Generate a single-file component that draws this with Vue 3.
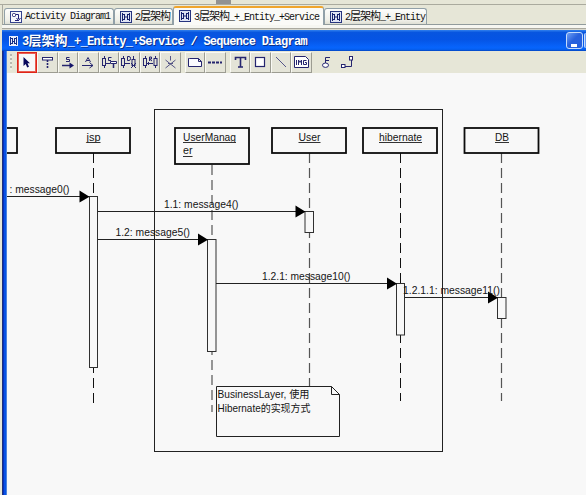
<script setup>
const tabs = [
  { kind: 'activity', width: 110, parts: [{ t: 'Activity Diagram1' }] },
  { kind: 'sequence', width: 59, parts: [{ t: '2' }, { t: '层架构', cjk: true }] },
  { kind: 'sequence', width: 151, active: true, parts: [{ t: '3' }, { t: '层架构', cjk: true }, { t: '_+_Entity_+Service' }] },
  { kind: 'sequence', width: 103, parts: [{ t: '2' }, { t: '层架构', cjk: true }, { t: '_+_Entity' }] },
]

const groups = [
  ['select', 'lifeline', 'sync', 'async', 'create', 'destroy', 'return', 'stop'],
  ['note', 'anchor'],
  ['text', 'rect', 'line', 'image'],
  ['lock', 'connector'],
]

const lifelines = [
  { x: 93.5, from: 153, to: 403 },
  { x: 212, from: 165, to: 412, soft: true },
  { x: 309.5, from: 153, to: 386, soft: true },
  { x: 400.5, from: 153, to: 401 },
  { x: 501.5, from: 153, to: 401, soft: true },
]

const heads = [
  { x: -58, w: 75, h: 25, lines: [] },
  { x: 56, w: 74, h: 25, lines: [{ t: 'jsp', x: 86.5, w: 14 }] },
  { x: 175, w: 74, h: 36, lines: [{ t: 'UserManag', x: 183, w: 53 }, { t: 'er', x: 183, w: 9.5 }] },
  { x: 272, w: 74, h: 25, lines: [{ t: 'User', x: 298.5, w: 22 }] },
  { x: 363, w: 74, h: 25, lines: [{ t: 'hibernate', x: 379, w: 43 }] },
  { x: 464.5, w: 74, h: 25, lines: [{ t: 'DB', x: 495, w: 14 }] },
]

const bars = [
  { x: 89.5, y: 196.5, w: 8, h: 171 },
  { x: 207.5, y: 239.5, w: 8.5, h: 112 },
  { x: 305, y: 211.5, w: 8.5, h: 21 },
  { x: 396.5, y: 283.5, w: 8, h: 51.5 },
  { x: 497.5, y: 297.5, w: 8.5, h: 21 },
]

const messages = [
  { x1: 0, x2: 89, y: 196.5, t: ': message0()', tx: 9.5, w: 60 },
  { x1: 98, x2: 305, y: 211.5, t: '1.1: message4()', tx: 164, w: 74.5 },
  { x1: 98, x2: 207.5, y: 239.5, t: '1.2: message5()', tx: 115.5, w: 74.5 },
  { x1: 216, x2: 396.5, y: 283.5, t: '1.2.1: message10()', tx: 262, w: 88.5 },
  { x1: 405, x2: 497.5, y: 297.5, t: '1.2.1.1: message11()', tx: 403, w: 97 },
]
</script>

<template>
  <div class="app">
    <div class="topstrip"><i class="mark"></i></div>
    <div class="tabbar">
      <div v-for="(tab, i) in tabs" :key="i" class="tab" :class="{ active: tab.active }" :style="{ width: tab.width + 'px' }">
        <svg v-if="tab.kind === 'activity'" class="tabicon" viewBox="0 0 12 12">
          <rect x=".5" y=".5" width="11" height="11" fill="#f6f6fb" stroke="#34428e" />
          <rect x="2.5" y="2.5" width="3" height="3" rx="1" fill="#fff" stroke="#20206f" />
          <path d="M6 3.5H8.5V8M6.5 7L8.5 9.5L10.5 7M5 9.5H9" fill="none" stroke="#20207a" />
        </svg>
        <svg v-else class="tabicon" viewBox="0 0 12 12">
          <rect x=".5" y=".5" width="11" height="11" fill="#dfe4f4" stroke="#26347f" />
          <path d="M2.5 2V10M4.5 3V9M7.5 3V9M9.5 2V10M2.5 3.5H4.5M7.5 3.5H9.5M2.5 8.5H4.5M7.5 8.5H9.5M4.5 6H7.5" fill="none" stroke="#15206e" />
        </svg>
        <span class="tablabel"><span v-for="(p, k) in tab.parts" :key="k" :class="{ cjk: p.cjk }">{{ p.t }}</span></span>
      </div>
    </div>
    <div class="seam"></div>
    <div class="window">
      <header class="titlebar">
        <svg class="winicon" viewBox="0 0 9 10">
          <rect width="9" height="10" fill="#e9eefb" />
          <path d="M1.5 1V9M3.5 2V8M5.5 2V8M7.5 1V9M1.5 2.5H3.5M5.5 2.5H7.5M1.5 7.5H3.5M5.5 7.5H7.5M3 5.5H6" stroke="#173087" fill="none" />
        </svg>
        <h1><span>3</span><span class="cjk">层架构</span><span>_+_Entity_+Service / Sequence Diagram</span></h1>
        <button class="minimize"><i></i></button>
        <i class="nextbutton"></i>
      </header>
      <nav class="toolbar">
        <i class="grip"></i>
        <div v-for="(group, g) in groups" :key="g" class="group" :class="{ flat: g === 3 }">
          <button v-for="name in group" :key="name" class="tool" :class="{ chosen: name === 'select' }">
            <svg viewBox="0 0 20 20" fill="none" stroke="#25256f">
              <path v-if="name === 'select'" d="M6.5 5V14L8.7 12L10.2 15.5L12 14.7L10.5 11.3H13Z" fill="#08085c" stroke="none" />
              <template v-else-if="name === 'lifeline'">
                <rect x="5.5" y="5.5" width="10" height="2.5" fill="#fff" />
                <path d="M10.5 8V16" stroke-width="1.6" stroke-dasharray="2 1" />
              </template>
              <template v-else-if="name === 'sync'">
                <path d="M11.5 5.5H8.5V7.5H11.5V9.5H8" />
                <path d="M4 13.5H14" stroke-width="1.5" />
                <path d="M11.5 10.5L16 13.5L11.5 16.5Z" fill="#15156a" stroke="none" />
              </template>
              <path v-else-if="name === 'async'" d="M7.5 10L10 5.5L12.5 10M8.5 8.5H11.5M4 13.5H15M11.5 10.5L15 13.5L11.5 16" />
              <template v-else-if="name === 'create'">
                <path d="M5.5 4V6M5.5 14V16M12.5 5.5H9.5V8.5H12M7 11.5H11" />
                <rect x="3.5" y="6.5" width="3" height="7" />
                <path d="M11.5 9.5H17.5V11.5H11.5Z" fill="#fff" /><path d="M14.5 11V16" stroke-width="1.5" />
              </template>
              <template v-else-if="name === 'destroy'">
                <path d="M4.5 4V6M4.5 14V16M8.5 4.5V8.5H10Q11.5 8.5 11.5 6.5T10 4.5H8.5M6 11.5H11M14.5 4V8M12 11L17 16M17 11L12 16" />
                <rect x="2.5" y="6.5" width="3" height="7" /><rect x="13" y="7.5" width="3" height="6" />
              </template>
              <template v-else-if="name === 'return'">
                <path d="M5.5 4V6M5.5 14V16M15.5 4V6M15.5 14V16M9.5 9V5H11.5V7H9.5L12 9M7 11.5H13M9 10L7.5 11.5L9 13" />
                <rect x="3.5" y="6.5" width="3" height="7" /><rect x="14" y="6.5" width="3" height="7" />
              </template>
              <path v-else-if="name === 'stop'" d="M10.5 4V8.5M5.5 8L15.5 16M15.5 8L5.5 16M8 11.5H13" stroke="#555586" />
              <path v-else-if="name === 'note'" d="M4.5 6.5H13.5L16.5 9.5V14.5H3.5V6.5ZM13.5 6.5V9.5H16.5" fill="#fafaff" />
              <path v-else-if="name === 'anchor'" d="M3 10.5H17" stroke-width="2" stroke-dasharray="3 1" />
              <path v-else-if="name === 'text'" d="M5.5 8V5.5H15.5V8M10.5 5.5V15M8 15H13" stroke-width="1.6" />
              <rect v-else-if="name === 'rect'" x="5.5" y="5.5" width="9" height="9" fill="#fff" stroke-width="1.2" />
              <path v-else-if="name === 'line'" d="M5 5L15 15" stroke="#55558a" />
              <template v-else-if="name === 'image'">
                <path d="M3.5 4.5H14.5L17.5 7.5V15.5H3.5Z" fill="#fff" />
                <path d="M5.5 8V13M7.5 13V8L9 10.5L10.5 8V13M15.5 8.5H12.5V12.5H15.5V10.5H14" />
              </template>
              <template v-else-if="name === 'lock'">
                <path d="M14 5.5H9.5V11M9.5 8.5H13" />
                <ellipse cx="9.5" cy="13.2" rx="3" ry="2.2" fill="#fff" />
              </template>
              <template v-else>
                <rect x="3.5" y="12.5" width="3.5" height="3" fill="#fff" /><rect x="11.5" y="4.5" width="3" height="3.5" fill="#fff" />
                <path d="M7 14.5H13.5V8" />
              </template>
            </svg>
          </button>
        </div>
      </nav>
      <svg class="canvas" viewBox="7 73 579 422">
        <rect class="thin" x="154.5" y="109.5" width="288" height="342" />
        <line v-for="(l, i) in lifelines" :key="'l' + i" class="dash" :class="{ soft: l.soft }" :x1="l.x" :x2="l.x" :y1="l.from" :y2="l.to" />
        <g v-for="(h, i) in heads" :key="'h' + i">
          <rect class="head" :x="h.x" y="128" :width="h.w" :height="h.h" />
          <g v-for="(n, k) in h.lines" :key="k">
            <text :x="n.x" :y="141 + k * 13" :textLength="n.w" lengthAdjust="spacingAndGlyphs">{{ n.t }}</text>
            <line class="under" :x1="n.x" :x2="n.x + n.w" :y1="142.5 + k * 14" :y2="142.5 + k * 14" />
          </g>
        </g>
        <rect v-for="(b, i) in bars" :key="'b' + i" class="bar" :x="b.x" :y="b.y" :width="b.w" :height="b.h" />
        <g v-for="(m, i) in messages" :key="'m' + i">
          <line class="thin" :x1="m.x1" :x2="m.x2" :y1="m.y" :y2="m.y" />
          <polygon :points="`${m.x2 - 9.5},${m.y - 6} ${m.x2 + 0.5},${m.y + 0.3} ${m.x2 - 9.5},${m.y + 6}`" />
          <text :x="m.tx" :y="m.y - 3.5" :textLength="m.w" lengthAdjust="spacingAndGlyphs">{{ m.t }}</text>
        </g>
        <path class="thin paper" d="M216.5 386.5H331.5L339.5 394.5V436.5H216.5Z" />
        <path class="thin" d="M331.5 386.5V394.5H339.5" />
        <text x="217.5" y="398" textLength="92" lengthAdjust="spacingAndGlyphs">BusinessLayer, 使用</text>
        <text x="217.5" y="411.5" textLength="93" lengthAdjust="spacingAndGlyphs">Hibernate的实现方式</text>
      </svg>
    </div>
  </div>
</template>

<style>
body { margin: 0; overflow: hidden; }
</style>

<style scoped>
.app {
  box-sizing: border-box;
  width: 586px;
  height: 495px;
  display: flex;
  flex-direction: column;
  background: #e6e6d7;
  overflow: hidden;
}
.topstrip { height: 4px; flex: none; border-bottom: 1px solid #aaaa9e; padding-left: 216px; }
.mark { display: block; width: 15px; height: 4px; background: #929292; }
.tabbar {
  box-sizing: border-box;
  flex: none;
  height: 20px;
  margin-left: 2px;
  padding-left: 1px;
  display: flex;
  align-items: flex-end;
  border-left: 1px solid #aaaaa0;
  border-bottom: 1px solid #919b9c;
}
.tab {
  box-sizing: border-box;
  flex: none;
  height: 16px;
  display: flex;
  align-items: center;
  gap: 3px;
  padding-left: 5px;
  border: 1px solid #91a0a8;
  border-bottom: 0;
  border-radius: 3px 3px 0 0;
  background: linear-gradient(#fdfdfb, #efefe8 75%, #dedfd4);
}
.tab.active {
  height: 19px;
  margin-bottom: -1px;
  border-top: 2px solid #f0a52c;
  background: #fafaf7;
}
.tab.active .tabicon { margin-bottom: 2px; }
.tab.active .tablabel { margin-bottom: 1px; }
.tabicon { width: 12px; height: 12px; flex: none; }
.tablabel {
  display: flex;
  align-items: baseline;
  white-space: pre;
  color: #111;
  font: 10px/14px "Liberation Mono", monospace;
  letter-spacing: -1px;
}
.cjk { font-family: "Noto Sans CJK SC", sans-serif; }
.tablabel .cjk { font-size: 11px; }
.seam {
  flex: none;
  height: 5px;
  margin-left: 2px;
  background: linear-gradient(#f6f6f1 0 3px, #aaa99f 3px 4px, #d8d8cd 4px);
}
.window {
  flex: 1;
  display: flex;
  flex-direction: column;
  margin-left: 2px;
  border-left: 5px solid #0b4fe0;
  border-image: linear-gradient(90deg, #1c327c 0 20%, #082fbf 20% 40%, #0752e4 40% 80%, #4a83e0 80%) 0 0 0 100% / 0 0 0 5px;
}
.titlebar {
  box-sizing: border-box;
  flex: none;
  height: 21px;
  margin-left: -5px;
  padding-left: 7px;
  display: flex;
  align-items: center;
  background: linear-gradient(#3080ee 0, #0755df 12%, #0554e4 45%, #0764fc 82%, #0561f4 92%, #0345c0);
}
.winicon { width: 9px; height: 10px; flex: none; margin-right: 4px; }
h1 {
  flex: 1;
  display: flex;
  align-items: baseline;
  margin: 0;
  color: #fff;
  white-space: pre;
  font: bold 12px/18px "Liberation Mono", monospace;
  letter-spacing: -0.73px;
  text-shadow: 1px 1px #0a3189;
}
h1 .cjk { font-size: 13px; letter-spacing: 0; }
.minimize {
  box-sizing: border-box;
  width: 17px;
  height: 17px;
  padding: 10px 0 0 4px;
  border: 1px solid #c5dcfb;
  border-radius: 3px;
  background: linear-gradient(135deg, #6e9ff4, #2861dd 45%, #2560de);
}
.minimize i { display: block; width: 6px; height: 3px; background: #fff; }
.nextbutton { width: 2px; height: 15px; margin-left: 1px; background: #6598f2; border-left: 1px solid #c5dcfb; box-sizing: border-box; border-radius: 3px 0 0 3px; }
.toolbar {
  box-sizing: border-box;
  flex: none;
  height: 22px;
  display: flex;
  align-items: center;
  padding-left: 3px;
  background: #e6e6d7;
}
.grip { width: 2px; height: 16px; margin-right: 4.5px; background: repeating-linear-gradient(#b9b9b0 0 2px, #eeeee4 2px 4px); }
.group { display: flex; margin-right: 4px; }
.tool {
  box-sizing: border-box;
  width: 20.5px;
  height: 21px;
  padding: 0;
  border: 1px solid;
  border-color: #fafaf5 #9c9c92 #9c9c92 #fafaf5;
  background: #e4e4d8;
}
.tool svg { display: block; width: 20px; height: 20px; margin: -1px; }
.tool.chosen { border: 1px solid #df2418; box-shadow: inset 0 0 0 1px #e85e52; background: #f8f8f8; }
.flat { gap: 2px; }
.flat .tool { border-color: transparent; background: none; }
.canvas {
  flex: none;
  display: block;
  width: 579px;
  height: 422px;
  background: #f8f8f8;
  font: 10.5px "Liberation Sans", "Noto Sans CJK SC", sans-serif;
}
.canvas text { fill: #151515; }
.thin { fill: none; stroke: #222; stroke-width: 1; }
.paper { fill: #f8f8f8; }
.head { fill: #f8f8f8; stroke: #0c0c0c; stroke-width: 1.8; }
.bar { fill: #f8f8f8; stroke: #303030; stroke-width: 1; }
.under { stroke: #333; stroke-width: 1; }
.dash { stroke: #111; stroke-width: 1; stroke-dasharray: 10 5; }
.dash.soft { stroke: #555; stroke-width: 1.2; }
</style>
